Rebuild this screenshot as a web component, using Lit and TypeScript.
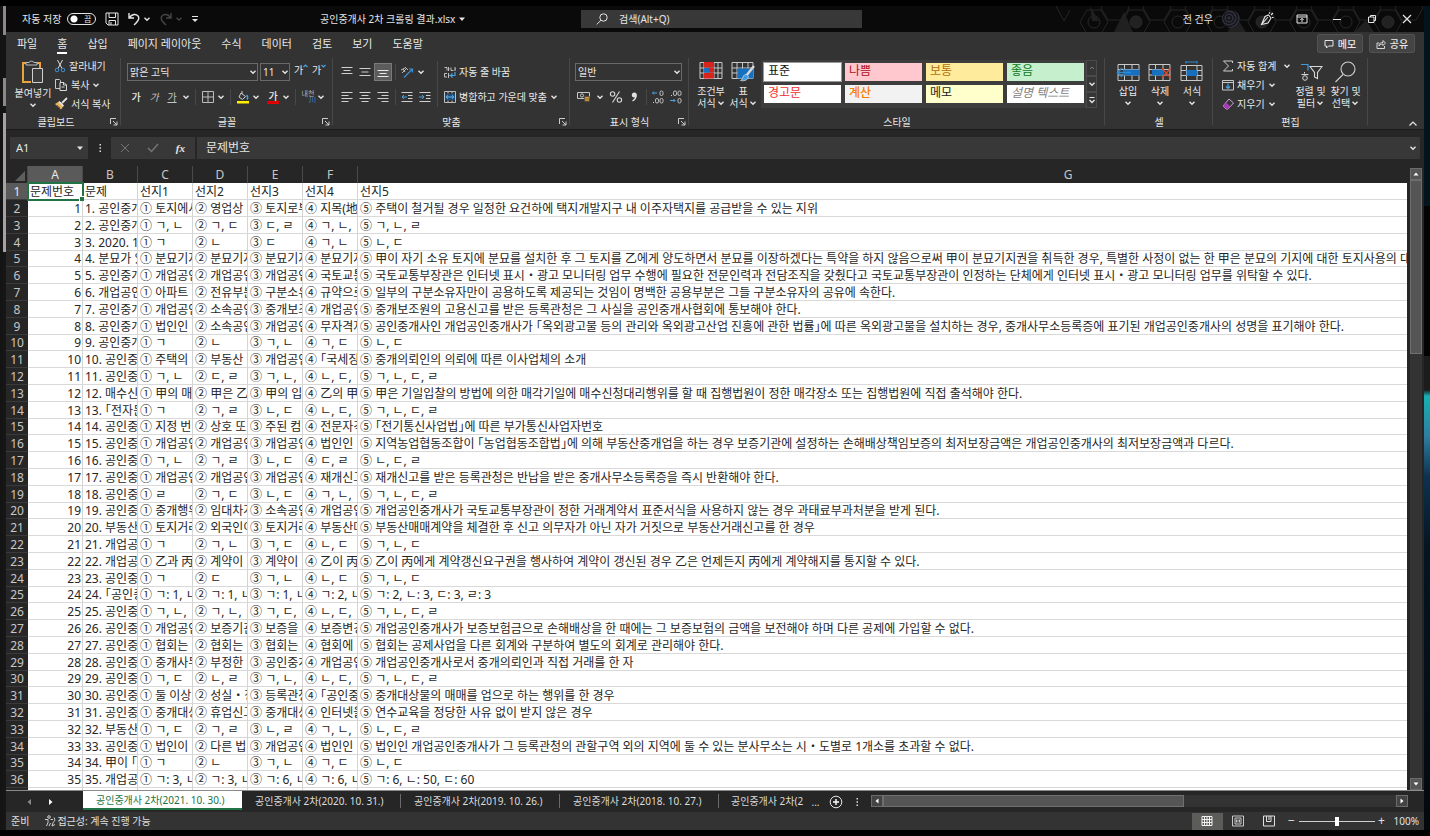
import { LitElement, html, css, svg, nothing } from "lit";
import { customElement, property } from "lit/decorators.js";
import { classMap } from "lit/directives/class-map.js";

const ICONS: Record<string, [number, number, unknown]> = {
  caret: [8, 8, svg`<path d="M1.5 2.8 4 5.2 6.5 2.8" stroke="#e6e6e6" stroke-width="1.4"/>`],
  caretDim: [8, 8, svg`<path d="M1.5 2.8 4 5.2 6.5 2.8" stroke="#4a4a4a" stroke-width="1.3"/>`],
  solid: [8, 8, svg`<path d="M1 2.5h6L4 6z" fill="#e6e6e6"/>`],
  save: [14, 14, svg`<path d="M1 1h12v12H3l-2-2z M4 1v4.5h6.5V1 M4 13V8.5h6.5V13 M6 10v3" stroke="#e6e6e6"/>`],
  undo: [14, 14, svg`<path d="M2 1v5h5 M2.3 5.6C5 2 9 1.600 11 4c2.500 3-.5 6-4 9" stroke="#e6e6e6" stroke-width="1.4"/>`],
  redo: [14, 14, svg`<path d="M12 1v5H7 M11.700 5.600C9 2 5 1.600 3 4c-2.500 3 .5 6 4 9" stroke="#454545" stroke-width="1.400"/>`],
  qat: [8, 10, svg`<path d="M1 2.500h6" stroke="#e6e6e6"/><path d="M1 5h6L4 8z" fill="#e6e6e6"/>`],
  search: [12, 12, svg`<circle cx="7.500" cy="4.500" r="3.700" stroke="#e6e6e6"/><path d="M5 7.200.8 11.400" stroke="#e6e6e6"/>`],
  pen: [14, 14, svg`<path d="M1.500 12.500 5 4.500l3.500-1.500 2.500 3-3 5zM1.500 12.500 8 5M9 1.500l1-1M11 3l2-2M12 5.500h1.500" stroke="#e6e6e6" stroke-width="1.100"/>`],
  ribbonOpt: [12, 12, svg`<path d="M1 2h10v8H1z M1 4h10 M6 9V5.500 M4.300 7 6 5.300 7.700 7" stroke="#e6e6e6"/>`],
  min: [10, 10, svg`<path d="M1 5.500h8" stroke="#e6e6e6"/>`],
  max: [10, 10, svg`<path d="M1.500 3h5.500v5.500H1.500z M3.500 3V1.500h5v5H7" stroke="#e6e6e6"/>`],
  close: [10, 10, svg`<path d="m1 1 8 8M9 1 1 9" stroke="#e6e6e6" stroke-width="1.200"/>`],
  memo: [10, 10, svg`<path d="M1 1.500h8v5.500H4.500L2.500 9V7H1z" stroke="#e6e6e6"/>`],
  share: [10, 10, svg`<path d="M3 4H1v5.500h7.500V7 M3 7c0-3 2-3.500 4-3.500V1.500L9.500 4 7 6.500V5C5 5 4 5.500 3 7z" stroke="#e6e6e6" stroke-width=".9"/>`],
  paste: [24, 26, svg`<path d="M6 4H2v19h8M15 4h4v5" stroke="#e9a33b" stroke-width="2"/><path d="M5 6V3.500h3a3 3 0 0 1 5 0h3V6z" fill="#333" stroke="#bdbdbd"/><path d="M11.500 9.500h10v14h-10z" fill="#3b3b3b" stroke="#d0d0d0"/>`],
  cut: [12, 14, svg`<path d="M3.500 1 8 9.500M8.500 1 4 9.500" stroke="#d8d8d8"/><circle cx="3" cy="11" r="1.800" stroke="#3f8fd0"/><circle cx="9" cy="11" r="1.800" stroke="#3f8fd0"/>`],
  copy: [14, 14, svg`<path d="M1.500 1.500h4l1 1v8h-5z" stroke="#c8c8c8"/><path d="M6 4.500h4l2.500 2.500v5.500H6z M9.500 4.500V7h3 M7.500 9h3" fill="#333" stroke="#d8d8d8"/>`],
  brush: [14, 14, svg`<path d="m13 1-5 5" stroke="#e0e0e0" stroke-width="1.800"/><path d="M5 4.500 9.500 9 7 12.500 1 7z" fill="#e8b765"/><path d="m5 4.500 4.500 4.500" stroke="#f0f0f0" stroke-width="1.400"/><path d="m3 8 3 3" stroke="#8b642a"/>`],
  upMark: [5, 4, svg`<path d="M.5 3 2.500 1l2 2" stroke="#4aa3e0" stroke-width="1.200"/>`],
  downMark: [5, 4, svg`<path d="M.5 1 2.500 3l2-2" stroke="#4aa3e0" stroke-width="1.200"/>`],
  border: [12, 12, svg`<path d="M.5.5h11v11H.5z M6 1v10M1 6h10" stroke="#bdbdbd"/>`],
  fill: [14, 14, svg`<path d="M5 3 9.500 6.500 6.500 9.500 3 7z M6 4V1" stroke="#d0d0d0"/><path d="M10.500 5c1.500 1.500 1.500 3 .5 4.500" stroke="#4aa3e0" stroke-width="1.400"/><path d="M1 11h12v2.500H1z" fill="#ffee00"/>`],
  top: [12, 12, svg`<path d="M.5 1.500h11M2.500 4.500h7M.5 7.500h11" stroke="#d0d0d0"/>`],
  mid: [12, 12, svg`<path d="M.5 2.500h11M2.500 6h7M.5 9.500h11" stroke="#d0d0d0"/>`],
  bot: [12, 12, svg`<path d="M.5 4.500h11M2.500 7.500h7M.5 10.500h11" stroke="#e8e8e8"/>`],
  left: [12, 12, svg`<path d="M.5 1.500h11M.5 4.500h7M.5 7.500h11M.5 10.500h7" stroke="#d0d0d0"/>`],
  center: [12, 12, svg`<path d="M.5 1.500h11M2.500 4.500h7M.5 7.500h11M2.500 10.500h7" stroke="#d0d0d0"/>`],
  right: [12, 12, svg`<path d="M.5 1.500h11M4.500 4.500h7M.5 7.500h11M4.500 10.500h7" stroke="#d0d0d0"/>`],
  orient: [14, 14, svg`<path d="M1 5l4-2M2 8l4-4M3 4l2 3M5 2l3 3" stroke="#bdbdbd"/><path d="M4 12.500 12.500 4M9 4h3.500v3.500" stroke="#3f8fd0" stroke-width="1.200"/>`],
  outdent: [12, 12, svg`<path d="M.5 1.500h11M7 4.500h4.500M7 7.500h4.500M.5 10.500h11" stroke="#d0d0d0"/><path d="M6 6H1M3 4 1 6l2 2" stroke="#4aa3e0"/>`],
  indent: [12, 12, svg`<path d="M.5 1.500h11M7 4.500h4.500M7 7.500h4.500M.5 10.500h11" stroke="#d0d0d0"/><path d="M0 6h5M3 4l2 2-2 2" stroke="#4aa3e0"/>`],
  wrap: [12, 12, svg`<path d="M.5 1.500H3v3M4.500 1v4M4.500 3h1M7 1.500v3h2.500M11 1v4M11 3h1M.5 7.500V11H3M.5 7.500H3M4.500 7v5M4.500 9.500h1" stroke="#cfcfcf" stroke-width=".9"/><path d="M11 6v3.500H6.500M8.500 7.500l-2 2 2 2" stroke="#4aa3e0" stroke-width="1.200"/>`],
  merge: [12, 12, svg`<path d="M.5.5h11v11H.5z M4 .5v2M8 .5v2M4 9.500v2M8 9.500v2" stroke="#bdbdbd"/><path d="M1 3h10v6H1z" fill="#1d4f7c"/><path d="M2 6h8M4 4.300 2.200 6 4 7.700M8 4.300 9.800 6 8 7.700" stroke="#6bb8ef"/>`],
  money: [14, 12, svg`<path d="M.5 1.500h12v6H.5z" stroke="#c8c8c8"/><circle cx="5" cy="4.500" r="1.600" stroke="#c8c8c8"/><path d="M7.500 5.500h5v5h-5z" fill="#e3ad55" stroke="#333" stroke-width=".6"/><path d="M8 7.300h4M8 9h4" stroke="#6d4c17" stroke-width=".7"/>`],
  percent: [14, 14, svg`<circle cx="3.600" cy="4" r="2.200" stroke="#d8d8d8" stroke-width="1.100"/><circle cx="10.400" cy="10" r="2.200" stroke="#d8d8d8" stroke-width="1.100"/><path d="M10.500 1.500l-7 11" stroke="#d8d8d8" stroke-width="1.100"/>`],
  comma: [8, 12, svg`<circle cx="4.300" cy="4" r="2.500" fill="#e0e0e0"/><path d="M5.900 4c.4 3-1 4.500-3.400 6" stroke="#e0e0e0" stroke-width="1.400"/>`],
  incDec: [14, 14, svg`<path d="M6 3H1.500M3 1.500 1.500 3 3 4.500" stroke="#4aa3e0"/><rect x="9" y="1" width="3" height="4.500" rx="1.400" stroke="#d0d0d0" stroke-width=".9"/><path d="M2.500 12v1" stroke="#d0d0d0"/><rect x="4.500" y="8.500" width="3" height="4.500" rx="1.400" stroke="#d0d0d0" stroke-width=".9"/><rect x="9" y="8.500" width="3" height="4.500" rx="1.400" stroke="#d0d0d0" stroke-width=".9"/>`],
  decDec: [14, 14, svg`<path d="M1 10.500h5M4.500 9 6 10.500 4.500 12" stroke="#4aa3e0"/><rect x="9" y="8.500" width="3" height="4.500" rx="1.400" stroke="#d0d0d0" stroke-width=".9"/><path d="M2.500 5v1" stroke="#d0d0d0"/><rect x="4.500" y="1" width="3" height="4.500" rx="1.400" stroke="#d0d0d0" stroke-width=".9"/><rect x="9" y="1" width="3" height="4.500" rx="1.400" stroke="#d0d0d0" stroke-width=".9"/>`],
  cond: [24, 20, svg`<path d="M1 1.500h22v16H1z M5 1.500v16M15 1.500v16M19 1.500v16M1 7h22M1 12h22" stroke="#c8c8c8"/><path d="M5 1h10v5.500H5zM5 12h10v5.500H5z" fill="#d8231d"/><path d="M5 7h5v4.500H5z" fill="#1b6fc2"/><path d="M10 7h5v4.500h-5z" fill="#d8231d"/>`],
  tableFmt: [24, 22, svg`<path d="M1 1.500h21v16H1z M6 1.500v16M11.500 1.500v16M17 1.500v16M1 7h21M1 12h21" stroke="#c8c8c8"/><path d="M6.500 7.500H22v10H6.500z" fill="#1670be"/><path d="M23 5 15 15" stroke="#d8d8d8" stroke-width="2.400"/><path d="M15.500 13.500c2 1 2.500 3 1 4.500-2 2-5 2-7 1.500 2-1 2-2 2.500-3.500.6-1.700 2-2.800 3.500-2.500z" fill="#3f9be0" stroke="#e0e0e0" stroke-width=".7"/>`],
  insert: [24, 22, svg`<path d="M2 3.500h21v16H2z M8.500 3.500v16M16 3.500v16M2 8.500h21M2 14h21" stroke="#c8c8c8"/><path d="M7 8.500h17v6H7z" fill="#1670be"/><path d="M15 11.500H1.500M6 7l-4.500 4.500L6 16" stroke="#2f8ad4" stroke-width="1.500"/>`],
  remove: [24, 22, svg`<path d="M1 3.500h21v16H1z M7.500 3.500v16M15 3.500v16M1 8.500h21M1 14h21" stroke="#c8c8c8"/><path d="M4 8.500h12v6H4z" fill="#1670be"/><path d="m14 7.500 8.500 9M22.500 7.500l-8.500 9" stroke="#d9452c" stroke-width="1.500"/>`],
  format: [24, 22, svg`<path d="M5.500 1h12M6 0v2.500M17 0v2.500" stroke="#2f8ad4"/><path d="M1 4.500h21v15H1z M6.500 4.500v15M17 4.500v15M1 9.500h21M1 14.500h21" stroke="#c8c8c8"/><path d="M6.500 9h10.500v6H6.500z" fill="#1670be"/>`],
  sum: [12, 12, svg`<path d="M10.500 3V1H1.500l5 5-5 5h9V9" stroke="#d0d0d0"/>`],
  fillDown: [12, 12, svg`<path d="M.5 1.500h11v9.500H.5z M.5 3.500h11" stroke="#c8c8c8"/><path d="M6 4.500V9.500M4 7.500l2 2 2-2" stroke="#4aa3e0" stroke-width="1.200"/>`],
  erase: [12, 12, svg`<path d="M7 1 11.500 5 6 11H4L1 8z" stroke="#d6a5dd"/><path d="M4 4.500 8.500 8.500 6 11H4L1 8z" fill="#a53cb5"/>`],
  sort: [24, 22, svg`<path d="M2 3.500h7v6" stroke="#3f9be0" stroke-width="1.200"/><path d="M5.500 11v1.500M2.500 13.500h7" stroke="#d8d8d8"/><circle cx="6" cy="17" r="2.300" stroke="#d8d8d8"/><path d="M11 5.500h12l-4.500 6v6l-3-1.500v-4.500z" stroke="#d8d8d8" stroke-width="1.100"/>`],
  find: [24, 22, svg`<circle cx="14" cy="8" r="7" stroke="#d0d0d0" stroke-width="1.100"/><path d="M9 13.500 1.500 21" stroke="#d0d0d0" stroke-width="1.100"/>`],
  launch: [8, 8, svg`<path d="M.5 6V.5H6M3 3l4 4M7 3.500V7H3.500" stroke="#dcdcdc" stroke-width=".9"/>`],
  up: [8, 8, svg`<path d="M.5 5.500 4 2l3.500 3.500" stroke="#e6e6e6" stroke-width="1.200"/>`],
  upDim: [8, 8, svg`<path d="M2 5 4 3l2 2" stroke="#777"/>`],
  more: [8, 8, svg`<path d="M1.500 1.500h5" stroke="#e6e6e6"/><path d="M1.500 4 4 6.500 6.500 4" stroke="#e6e6e6" stroke-width="1.300"/>`],
  dots: [4, 10, svg`<path d="M1.500 1h1.500v1.500H1.500zM1.500 4.300h1.500v1.500H1.500zM1.500 7.600h1.500v1.500H1.500z" fill="#ddd"/>`],
  cancel: [10, 10, svg`<path d="m1 1 8 8M9 1 1 9" stroke="#757575"/>`],
  check: [12, 10, svg`<path d="m1 5 3.500 3.500L11 1" stroke="#757575" stroke-width="1.500"/>`],
  corner: [10, 10, svg`<path d="M10 0v10H0z" fill="#5e5e5e"/>`],
  prev: [6, 8, svg`<path d="M5 1v6L1.500 4z" fill="#8a8a8a"/>`],
  next: [6, 8, svg`<path d="M1 1v6l3.500-3z" fill="#fff"/>`],
  sbUp: [8, 8, svg`<path d="M1.500 5.500h5L4 2.500z" fill="#fff"/>`],
  sbDown: [8, 8, svg`<path d="M1.500 2.500h5L4 5.500z" fill="#fff"/>`],
  sbLeft: [8, 8, svg`<path d="M5.500 1.500v5L2.500 4z" fill="#fff"/>`],
  sbRight: [8, 8, svg`<path d="M2.500 1.500v5L5.500 4z" fill="#fff"/>`],
  add: [14, 14, svg`<circle cx="7" cy="7" r="5.800" stroke="#e6e6e6"/><path d="M4 7h6M7 4v6" stroke="#fff" stroke-width="1.400"/>`],
  a11y: [12, 12, svg`<circle cx="5" cy="2" r="1.300" stroke="#e0e0e0" stroke-width=".9"/><path d="M1 4.500h3v3L2.500 11M9 4.500H6.500M6.500 8 5 11M10 2.500c1.500 2 .8 4-1 5L8 11l3-1.500" stroke="#e0e0e0" stroke-width=".9"/>`],
  vNormal: [12, 12, svg`<path d="M1 1.500h10v9H1zM3.500 1.500v9M6 1.500v9M8.500 1.500v9M1 4.500h10M1 7.500h10" stroke="#f0f0f0"/>`],
  vPage: [12, 12, svg`<path d="M.5 1h11v10H.5z M3 3h6v6H3z M4.500 4.500v3M6 4.500v3M7.500 4.500v3" stroke="#d8d8d8" stroke-width=".9"/>`],
  vBreak: [12, 12, svg`<path d="M.5 1h11v10H.5z M3.500 1v5.500H8V1M6 1v4" stroke="#e0e0e0"/>`],
};

const icon = (name: string) => {
  const [w, h, body] = ICONS[name];
  return html`<svg width=${w} height=${h} viewBox="0 0 ${w} ${h}" fill="none" aria-hidden="true">${body}</svg>`;
};

const uiFont = css`
  :host, button, input, select {
    font-family: "Noto Sans", "Noto Sans CJK KR", sans-serif;
    font-size: 10px;
    line-height: 12px;
  }
  * { box-sizing: border-box; }
  button {
    background: none; border: 0; margin: 0; padding: 0; color: inherit;
    display: flex; align-items: center; justify-content: center; white-space: nowrap;
  }
  svg { display: block; flex: none; }
`;

const TABS = ["파일", "홈", "삽입", "페이지 레이아웃", "수식", "데이터", "검토", "보기", "도움말"];

@customElement("title-bar")
class TitleBar extends LitElement {
  static styles = [uiFont, css`
    :host { display: flex; align-items: center; height: 26px; background: #0a0a0a; color: #e6e6e6; position: relative; }
    .quick { display: flex; align-items: center; width: 314px; padding-left: 16px; }
    .auto { display: flex; align-items: center; gap: 6px; margin-right: 9px; }
    .toggle { appearance: none; width: 29px; height: 12px; margin: 0; border: 1px solid #e6e6e6; border-radius: 6px;
      background: radial-gradient(circle at 6px 5px, #fff 3px, transparent 4px); }
    .switch { position: relative; display: flex; }
    .state { position: absolute; right: 5px; top: 0; font-size: 8px; line-height: 12px; }
    .group { display: flex; align-items: center; gap: 2px; margin-right: 8px; }
    .file { width: 261px; display: flex; align-items: center; gap: 3px; }
    .search { display: flex; align-items: center; gap: 11px; width: 281px; height: 18px; background: #383838; padding-left: 15px; }
    .search input { flex: 1; min-width: 0; background: none; border: 0; padding: 0; outline: 0; color: #e6e6e6; }
    .search input::placeholder { color: #e6e6e6; opacity: 1; }
    .right { flex: 1; display: flex; align-items: center; justify-content: flex-end; height: 26px; z-index: 1; }
    .right button { width: 35px; height: 26px; }
    .user { gap: 9px; margin-right: 9px; display: flex; align-items: center; }
    .avatar { width: 18px; height: 18px; border-radius: 50%; background: repeating-radial-gradient(circle at 7px 8px, #30303c 0 1px, #15151b 2px 3px); }
    .art { position: absolute; right: 0; top: 0; }
  `];
  render() {
    const hex = (x: number, y: number, f = "none") =>
      svg`<path d="M${x} ${y}l7-12h14l7 12-7 12h-14z" fill=${f} stroke="#252525"/>`;
    return html`
      <svg class="art" width="372" height="26" viewBox="0 0 372 26" fill="none" aria-hidden="true">
        <path d="M4 0l8 15 6-11" stroke="#252525"/>
        ${[28, 70, 112, 154, 196, 238, 280, 322].map((x, i) => svg`${hex(x, 16)}${hex(x + 21, 2)}
          <circle cx=${x + 14} cy="16" r="6" fill=${i % 3 === 1 ? "#222" : "none"} stroke="#292929"/>`)}
        <path d="M38 0l9 15-7 0zM62 26l10-20 9 20zM176 26l9-14 9 14zM302 26l12-12 8 12z" fill="#202020"/>
      </svg>
      <div class="quick">
        <label class="auto">자동 저장
          <span class="switch"><input class="toggle" type="checkbox" aria-label="자동 저장"><span class="state">끔</span></span>
        </label>
        <div class="group"><button aria-label="저장">${icon("save")}</button></div>
        <div class="group"><button aria-label="실행 취소">${icon("undo")}</button>${icon("caret")}</div>
        <div class="group"><button aria-label="다시 실행">${icon("redo")}</button>${icon("caretDim")}</div>
        <button aria-label="빠른 실행 도구 모음">${icon("qat")}</button>
      </div>
      <div class="file">공인중개사 2차 크롤링 결과.xlsx ${icon("solid")}</div>
      <label class="search">${icon("search")}<input placeholder="검색(Alt+Q)" aria-label="검색"></label>
      <div class="right">
        <div class="user">전 건우<span class="avatar"></span></div>
        ${["pen", "ribbonOpt", "min", "max", "close"].map((n) => html`<button aria-label=${n}>${icon(n)}</button>`)}
      </div>`;
  }
}

@customElement("ribbon-bar")
class RibbonBar extends LitElement {
  static styles = [uiFont, css`
    :host { display: block; background: #333; color: #e8e8e8; border-bottom: 1px solid #1c1c1c; }
    .tabs { display: flex; align-items: center; height: 23px; padding: 0 9px 0 11px; gap: 20px; }
    .tabs button { font-size: 11px; height: 21px; border-bottom: 2px solid transparent; padding-top: 2px; }
    .tabs .on { border-bottom-color: #fff; }
    .acts { margin-left: auto; display: flex; gap: 6px; }
    .tabs .acts button { width: 46px; height: 19px; font-size: 10px; gap: 4px; background: #444; border: 1px solid #525252; border-radius: 2px; padding: 0; font-weight: 500; }
    .groups { display: flex; height: 74px; }
    .g { display: flex; flex-direction: column; position: relative; padding-top: 2px; flex: none; }
    .g::after { content: ""; position: absolute; right: 0; top: 3px; bottom: 4px; width: 1px; background: #484848; }
    .body { display: flex; height: 58px; }
    .cap { text-align: center; line-height: 14px; }
    .g .launch { position: absolute; right: 3px; bottom: 3px; }
    .clip { width: 115px; } .font { width: 212px; } .align { width: 237px; } .num { width: 119px; }
    .style { width: 416px; } .cells { width: 108px; } .edit { width: 155px; }
    .clip .cap { padding-right: 15px; }
    .clip .body { padding-left: 6px; } .font .body { padding-left: 6px; } .align .body { padding-left: 5px; }
    .num .body { padding-left: 5px; } .style .body { padding-left: 6px; } .cells .body { padding-left: 7px; } .edit .body { padding-left: 9px; }
    .big { flex-direction: column; justify-content: flex-start; width: 32px; padding-top: 4px; }
    .big .pic { height: 24px; }
    .big .line { display: flex; align-items: center; gap: 1px; height: 12px; }
    .edit .big { width: 35px; }
    .edit .three { margin-right: 2px; }
    .paste { width: 42px; padding-top: 2px; }
    .paste .pic { height: 28px; }
    .three { display: flex; flex-direction: column; gap: 1px; }
    .three button { height: 18px; gap: 3px; justify-content: flex-start; }
    .wide { width: 54px; justify-content: space-between; }
    .wide, .lab { display: flex; align-items: center; gap: 3px; }
    .two { display: flex; flex-direction: column; gap: 1px; padding-top: 3px; }
    .row { display: flex; align-items: center; height: 24px; }
    .b { width: 18px; height: 18px; }
    .k { width: 10px; } .i { width: 16px; } .far { margin-left: 4px; }
    .k2 { width: 14px; }
    .on-box { background: #5c5c5c; border: 1px solid #7a7a7a; }
    .sep { width: 9px; display: flex; justify-content: center; } .slim { width: 6px; }
    .sep::before { content: ""; width: 1px; height: 16px; background: #474747; }
    .tall { width: 1px; height: 46px; margin: 4px 6px 0 3px; background: #484848; }
    .pick { position: relative; display: flex; align-items: center; height: 18px; }
    .pick select { appearance: none; width: 100%; height: 18px; background: #333; border: 1px solid #6a6a6a; border-radius: 0; color: #e8e8e8; padding: 0 2px; }
    .pick svg { position: absolute; right: 1px; }
    .name { width: 131px; margin-right: 2px; } .size { width: 30px; margin-right: 2px; } .kind { width: 107px; }
    .it { font-style: italic; } .un { text-decoration: underline; }
    .dim { color: #c4c4c4; } .bold { font-weight: 500; }
    .mark { align-items: flex-start; padding-top: 1px; }
    .colour { flex-direction: column; line-height: 10px; }
    .colour::after { content: ""; width: 12px; height: 3px; background: #e00000; }
    .han { flex-direction: column; font-size: 7px; line-height: 6px; color: #b5b5b5; }
    .han em { font-style: normal; color: #3f8fd0; align-self: flex-end; }
    .gallery { display: flex; margin: 3px 0 4px 2px; background: #3d3d3d; height: 48px; padding-left: 1px; }
    .sw { display: grid; grid-template-columns: repeat(4, 77px); grid-template-rows: 18px 18px; gap: 4px; padding: 3px 2px; }
    .sw button { justify-content: flex-start; align-items: flex-start; padding: 0 4px; font-size: 12px; line-height: 16px; }
    .s-std { background: #fff; color: #111; outline: 1px solid #999; }
    .s-bad { background: #ffc7ce; color: #b01020; } .s-mid { background: #ffeb9c; color: #b0700a; }
    .s-good { background: #c6efce; color: #0b7a1a; } .s-warn { background: #fff; color: #ee3030; }
    .s-calc { background: #f2f2f2; color: #fa7d00; font-weight: 500; } .s-memo { background: #ffffcc; color: #222; }
    .s-desc { background: #fff; color: #7f7f7f; font-style: italic; }
    .scroll { width: 11px; display: flex; flex-direction: column; }
    .scroll button { flex: 1; border: 1px solid #4a4a4a; background: #363636; }
    .rest { flex: 1; display: flex; justify-content: flex-end; align-items: flex-end; padding: 0 7px 1px 0; }
  `];

  private big(name: string, a: string, b?: string, cls = "") {
    return html`<button class="big ${cls}"><span class="pic">${icon(name)}</span>
      <span class="line">${a}</span><span class="line">${b ?? nothing}${icon("caret")}</span></button>`;
  }
  private btn(name: string, label: string, cls = "b") {
    return html`<button class=${cls} aria-label=${label}>${icon(name)}</button>`;
  }
  private drop(cls = "k") {
    return html`<button class=${cls} aria-label="옵션">${icon("caret")}</button>`;
  }
  private launcher() {
    return html`<button class="launch" aria-label="대화 상자 표시">${icon("launch")}</button>`;
  }

  render() {
    const styles = [["std", "표준"], ["bad", "나쁨"], ["mid", "보통"], ["good", "좋음"], ["warn", "경고문"], ["calc", "계산"], ["memo", "메모"], ["desc", "설명 텍스트"]];
    return html`
      <nav class="tabs">
        ${TABS.map((t) => html`<button class=${classMap({ on: t === "홈" })}>${t}</button>`)}
        <div class="acts"><button>${icon("memo")}메모</button><button>${icon("share")}공유</button></div>
      </nav>
      <div class="groups">
        <section class="g clip">
          <div class="body">
            <button class="big paste"><span class="pic">${icon("paste")}</span><span class="line">붙여넣기</span><span class="line">${icon("caret")}</span></button>
            <div class="three">
              <button>${icon("cut")}잘라내기</button>
              <button>${icon("copy")}복사 ${this.drop("k2")}</button>
              <button>${icon("brush")}서식 복사</button>
            </div>
          </div>
          <div class="cap">클립보드</div>${this.launcher()}
        </section>
        <section class="g font">
          <div class="body"><div class="two">
            <div class="row">
              <span class="pick name"><select aria-label="글꼴"><option>맑은 고딕</option></select>${icon("caret")}</span>
              <span class="pick size"><select aria-label="글꼴 크기"><option>11</option></select>${icon("caret")}</span>
              <button class="b mark">가${icon("upMark")}</button><button class="b mark">가${icon("downMark")}</button>
            </div>
            <div class="row">
              <button class="b bold">가</button><button class="b it dim">가</button><button class="b un dim">가</button>${this.drop()}
              <span class="sep"></span>${this.btn("border", "테두리", "i")}${this.drop()}
              <span class="sep"></span>${this.btn("fill", "채우기 색", "i")}${this.drop()}
              <button class="i far colour bold">가</button>${this.drop()}
              <span class="sep"></span><button class="i han">내천<em>川</em></button>${this.drop()}
            </div>
          </div></div>
          <div class="cap">글꼴</div>${this.launcher()}
        </section>
        <section class="g align">
          <div class="body">
            <div class="two">
              <div class="row">${this.btn("top", "위쪽 맞춤")}${this.btn("mid", "가운데 맞춤")}${this.btn("bot", "아래쪽 맞춤", "b on-box")}
                <span class="sep slim"></span>${this.btn("orient", "방향")}${this.drop()}</div>
              <div class="row">${this.btn("left", "왼쪽 맞춤")}${this.btn("center", "가운데")}${this.btn("right", "오른쪽 맞춤")}
                <span class="sep slim"></span>${this.btn("outdent", "내어쓰기")}${this.btn("indent", "들여쓰기")}</div>
            </div>
            <span class="tall"></span>
            <div class="two">
              <div class="row"><button class="lab">${icon("wrap")}자동 줄 바꿈</button></div>
              <div class="row"><button class="lab">${icon("merge")}병합하고 가운데 맞춤</button>${this.drop("k2")}</div>
            </div>
          </div>
          <div class="cap">맞춤</div>${this.launcher()}
        </section>
        <section class="g num">
          <div class="body"><div class="two">
            <div class="row"><span class="pick kind"><select aria-label="표시 형식"><option>일반</option></select>${icon("caret")}</span></div>
            <div class="row">${this.btn("money", "회계 표시 형식")}${this.drop("k2")}${this.btn("percent", "백분율")}${this.btn("comma", "쉼표")}
              <span class="sep slim"></span>${this.btn("incDec", "자릿수 늘림")}${this.btn("decDec", "자릿수 줄임")}</div>
          </div></div>
          <div class="cap">표시 형식</div>${this.launcher()}
        </section>
        <section class="g style">
          <div class="body">
            ${this.big("cond", "조건부", "서식")}${this.big("tableFmt", "표", "서식")}
            <div class="gallery">
              <div class="sw">${styles.map(([k, t]) => html`<button class="s-${k}">${t}</button>`)}</div>
              <div class="scroll">${this.btn("upDim", "위로", "")}${this.btn("caret", "아래로", "")}${this.btn("more", "자세히", "")}</div>
            </div>
          </div>
          <div class="cap">스타일</div>
        </section>
        <section class="g cells">
          <div class="body">${this.big("insert", "삽입")}${this.big("remove", "삭제")}${this.big("format", "서식")}</div>
          <div class="cap">셀</div>
        </section>
        <section class="g edit">
          <div class="body">
            <div class="three">
              <button>${icon("sum")}<span class="wide">자동 합계${icon("caret")}</span></button>
              <button>${icon("fillDown")}<span class="lab">채우기${icon("caret")}</span></button>
              <button>${icon("erase")}<span class="lab">지우기${icon("caret")}</span></button>
            </div>
            ${this.big("sort", "정렬 및", "필터")}${this.big("find", "찾기 및", "선택")}
          </div>
          <div class="cap">편집</div>
        </section>
        <div class="rest"><button aria-label="리본 메뉴 축소">${icon("up")}</button></div>
      </div>`;
  }
}

@customElement("formula-bar")
class FormulaBar extends LitElement {
  static styles = [uiFont, css`
    :host { display: flex; align-items: center; height: 36px; padding: 0 4px; background: #262626; color: #e6e6e6; }
    .name { display: flex; align-items: center; width: 78px; height: 22px; background: #383838; padding: 0 4px 0 6px; }
    input { flex: 1; min-width: 0; background: none; border: 0; outline: 0; padding: 0; color: #e6e6e6; font-size: 11px; }
    .dots { width: 23px; display: flex; justify-content: center; }
    .tools { display: flex; align-items: center; justify-content: space-between; width: 84px; height: 22px; background: #383838; padding: 0 10px 0 9px; margin-right: 2px; }
    .fx { font: italic bold 11px/14px "Liberation Serif", serif; }
    .text { flex: 1; display: flex; align-items: center; height: 22px; background: #383838; padding: 0 3px 0 9px; }
    .text input { font-size: 12px; line-height: 16px; }
  `];
  render() {
    return html`
      <label class="name"><input aria-label="이름 상자" value="A1">${icon("solid")}</label>
      <span class="dots">${icon("dots")}</span>
      <div class="tools"><button aria-label="취소">${icon("cancel")}</button><button aria-label="입력">${icon("check")}</button><button class="fx">fx</button></div>
      <label class="text"><input aria-label="수식 입력줄" value="문제번호">${icon("caret")}</label>`;
  }
}

const ROWS: string[][] = [
  ["1. 공인중개", "토지에서", "영업상", "토지로부", "지목(地", "주택이 철거될 경우 일정한 요건하에 택지개발지구 내 이주자택지를 공급받을 수 있는 지위"],
  ["2. 공인중개", "ㄱ, ㄴ", "ㄱ, ㄷ", "ㄷ, ㄹ", "ㄱ, ㄴ,", "ㄱ, ㄴ, ㄹ"],
  ["3. 2020. 10", "ㄱ", "ㄴ", "ㄷ", "ㄱ, ㄴ", "ㄴ, ㄷ"],
  ["4. 분묘가 있", "분묘기지", "분묘기지", "분묘기지", "분묘기지", "甲이 자기 소유 토지에 분묘를 설치한 후 그 토지를 乙에게 양도하면서 분묘를 이장하겠다는 특약을 하지 않음으로써 甲이 분묘기지권을 취득한 경우, 특별한 사정이 없는 한 甲은 분묘의 기지에 대한 토지사용의 대가"],
  ["5. 공인중개", "개업공인", "개업공인", "개업공인", "국토교통", "국토교통부장관은 인터넷 표시・광고 모니터링 업무 수행에 필요한 전문인력과 전담조직을 갖췄다고 국토교통부장관이 인정하는 단체에게 인터넷 표시・광고 모니터링 업무를 위탁할 수 있다."],
  ["6. 개업공인", "아파트", "전유부분", "구분소유", "규약으로", "일부의 구분소유자만이 공용하도록 제공되는 것임이 명백한 공용부분은 그들 구분소유자의 공유에 속한다."],
  ["7. 공인중개", "개업공인", "소속공인", "중개보조", "개업공인", "중개보조원의 고용신고를 받은 등록관청은 그 사실을 공인중개사협회에 통보해야 한다."],
  ["8. 공인중개", "법인인", "소속공인", "개업공인", "무자격자", "공인중개사인 개업공인중개사가 「옥외광고물 등의 관리와 옥외광고산업 진흥에 관한 법률」에 따른 옥외광고물을 설치하는 경우, 중개사무소등록증에 표기된 개업공인중개사의 성명을 표기해야 한다."],
  ["9. 공인중개", "ㄱ", "ㄴ", "ㄱ, ㄴ", "ㄱ, ㄷ", "ㄴ, ㄷ"],
  ["10. 공인중", "주택의", "부동산", "개업공인", "「국세징", "중개의뢰인의 의뢰에 따른 이사업체의 소개"],
  ["11. 공인중", "ㄱ, ㄴ", "ㄷ, ㄹ", "ㄱ, ㄴ,", "ㄴ, ㄷ,", "ㄱ, ㄴ, ㄷ, ㄹ"],
  ["12. 매수신", "甲의 매", "甲은 乙", "甲의 입", "乙의 甲", "甲은 기일입찰의 방법에 의한 매각기일에 매수신청대리행위를 할 때 집행법원이 정한 매각장소 또는 집행법원에 직접 출석해야 한다."],
  ["13. 「전자문", "ㄱ", "ㄱ, ㄹ", "ㄴ, ㄷ", "ㄴ, ㄷ,", "ㄱ, ㄴ, ㄷ, ㄹ"],
  ["14. 공인중", "지정 번", "상호 또", "주된 컴", "전문자격", "「전기통신사업법」에 따른 부가통신사업자번호"],
  ["15. 공인중", "개업공인", "개업공인", "개업공인", "법인인", "지역농업협동조합이 「농업협동조합법」에 의해 부동산중개업을 하는 경우 보증기관에 설정하는 손해배상책임보증의 최저보장금액은 개업공인중개사의 최저보장금액과 다르다."],
  ["16. 공인중", "ㄱ, ㄴ", "ㄱ, ㄹ", "ㄴ, ㄷ", "ㄷ, ㄹ", "ㄴ, ㄷ, ㄹ"],
  ["17. 공인중", "개업공인", "개업공인", "개업공인", "재개신고", "재개신고를 받은 등록관청은 반납을 받은 중개사무소등록증을 즉시 반환해야 한다."],
  ["18. 공인중", "ㄹ", "ㄱ, ㄷ", "ㄴ, ㄷ", "ㄱ, ㄴ,", "ㄱ, ㄴ, ㄷ, ㄹ"],
  ["19. 공인중", "중개행위", "임대차계", "소속공인", "개업공인", "개업공인중개사가 국토교통부장관이 정한 거래계약서 표준서식을 사용하지 않는 경우 과태료부과처분을 받게 된다."],
  ["20. 부동산", "토지거래", "외국인이", "토지거래", "부동산매", "부동산매매계약을 체결한 후 신고 의무자가 아닌 자가 거짓으로 부동산거래신고를 한 경우"],
  ["21. 개업공", "ㄱ", "ㄱ, ㄴ", "ㄱ, ㄷ", "ㄴ, ㄷ", "ㄱ, ㄴ, ㄷ"],
  ["22. 개업공", "乙과 丙", "계약이", "계약이", "乙이 丙", "乙이 丙에게 계약갱신요구권을 행사하여 계약이 갱신된 경우 乙은 언제든지 丙에게 계약해지를 통지할 수 있다."],
  ["23. 공인중", "ㄱ", "ㄷ", "ㄱ, ㄴ", "ㄴ, ㄷ", "ㄱ, ㄴ, ㄷ"],
  ["24. 「공인중", "ㄱ: 1, ㄴ", "ㄱ: 1, ㄴ", "ㄱ: 1, ㄴ", "ㄱ: 2, ㄴ", "ㄱ: 2, ㄴ: 3, ㄷ: 3, ㄹ: 3"],
  ["25. 공인중", "ㄱ, ㄴ,", "ㄱ, ㄴ,", "ㄱ, ㄷ,", "ㄴ, ㄷ,", "ㄱ, ㄴ, ㄷ, ㄹ"],
  ["26. 공인중", "개업공인", "보증기관", "보증을", "보증변경", "개업공인중개사가 보증보험금으로 손해배상을 한 때에는 그 보증보험의 금액을 보전해야 하며 다른 공제에 가입할 수 없다."],
  ["27. 공인중", "협회는", "협회는", "협회는", "협회에", "협회는 공제사업을 다른 회계와 구분하여 별도의 회계로 관리해야 한다."],
  ["28. 공인중", "중개사무", "부정한", "공인중개", "개업공인", "개업공인중개사로서 중개의뢰인과 직접 거래를 한 자"],
  ["29. 공인중", "ㄱ, ㄷ", "ㄴ, ㄹ", "ㄱ, ㄴ,", "ㄴ, ㄷ,", "ㄱ, ㄴ, ㄷ, ㄹ"],
  ["30. 공인중", "둘 이상", "성실・정", "등록관청", "「공인중", "중개대상물의 매매를 업으로 하는 행위를 한 경우"],
  ["31. 공인중", "중개대상", "휴업신고", "중개대상", "인터넷을", "연수교육을 정당한 사유 없이 받지 않은 경우"],
  ["32. 부동산", "ㄱ, ㄷ", "ㄱ, ㄹ", "ㄴ, ㄹ", "ㄱ, ㄴ,", "ㄴ, ㄷ, ㄹ"],
  ["33. 공인중", "법인이", "다른 법", "개업공인", "법인인", "법인인 개업공인중개사가 그 등록관청의 관할구역 외의 지역에 둘 수 있는 분사무소는 시・도별로 1개소를 초과할 수 없다."],
  ["34. 甲이 「부", "ㄱ", "ㄴ", "ㄱ, ㄴ", "ㄱ, ㄷ", "ㄴ, ㄷ"],
  ["35. 개업공", "ㄱ: 3, ㄴ", "ㄱ: 3, ㄴ", "ㄱ: 6, ㄴ", "ㄱ: 6, ㄴ", "ㄱ: 6, ㄴ: 50, ㄷ: 60"],
  ["36. 공인중", "거래당사", "개업공인", "개업공인", "시세에", "개업공인중개사가 거래를 금지한 당사자 간의 거래 이외의 다른 용도로 개설한 경우"],
];
const MARKS = ["", "① ", "② ", "③ ", "④ ", "⑤ "];

@customElement("sheet-grid")
class SheetGrid extends LitElement {
  static styles = [uiFont, css`
    :host { display: grid; grid-template-columns: 1fr 17px; background: #262626; min-height: 0; overflow: hidden; }
    .view { overflow: hidden; min-width: 0; background: #262626; }
    table { table-layout: fixed; border-collapse: separate; border-spacing: 0; width: 1773px; font-size: 12px; line-height: 15px; }
    .c-head { width: 22px; } .c-n { width: 55px; } .c-g { width: 1421px; }
    th, td { padding: 0 2px; white-space: nowrap; overflow: hidden; text-align: left; font-weight: 400; vertical-align: middle; }
    tr { height: 17px; }
    tbody tr:nth-child(5n) { height: 16px; }
    thead th { height: 16px; background: #262626; color: #c6c6c6; text-align: center; border-right: 1px solid #4a4a4a; }
    tbody th { background: #262626; color: #c6c6c6; text-align: center; padding: 0; border-bottom: 1px solid #3a3a3a; }
    td { background: #fff; color: #262626; border-right: 1px solid #d4d4d4; border-bottom: 1px solid #d9d9d9; }
    .quote { font-feature-settings: "halt"; }
    .n { text-align: right; padding-right: 1px; }
    .corner svg { margin-left: auto; margin-top: 3px; }
    thead .sel, tbody .sel { background: #5a5a5a; color: #e8e8e8; }
    .active { position: relative; overflow: visible; outline: 2px solid #217346; outline-offset: -1px; }
    .active::after { content: ""; position: absolute; right: -2px; bottom: -2px; width: 4px; height: 4px; background: #217346; border: 1px solid #fff; border-width: 1px 0 0 1px; }
    .bar { display: flex; flex-direction: column; margin: 2px 2px 0 3px; background: #333; }
    .bar button { height: 12px; background: #555; border: 1px solid #6c6c6c; }
    .thumb { height: 28%; background: #555; border: 1px solid #707070; }
    .bar .end { margin-top: auto; }
  `];
  render() {
    return html`
      <div class="view">
        <table>
          <colgroup><col class="c-head">${[1, 2, 3, 4, 5, 6].map(() => html`<col class="c-n">`)}<col class="c-g"></colgroup>
          <thead><tr><th class="corner">${icon("corner")}</th>${[..."ABCDEFG"].map((c) => html`<th class=${classMap({ sel: c === "A" })}>${c}</th>`)}</tr></thead>
          <tbody>
            <tr><th class="sel">1</th><td class="active">문제번호</td><td>문제</td>${[1, 2, 3, 4, 5].map((n) => html`<td>선지${n}</td>`)}</tr>
            ${ROWS.map((r, i) => html`<tr><th>${i + 2}</th><td class="n">${i + 1}</td>${r.map((t, j) =>
              html`<td class=${classMap({ quote: t.includes("「") })}>${MARKS[j]}${t}</td>`)}</tr>`)}
          </tbody>
        </table>
      </div>
      <div class="bar">
        <button aria-label="위로 스크롤">${icon("sbUp")}</button><div class="thumb"></div>
        <button class="end" aria-label="아래로 스크롤">${icon("sbDown")}</button>
      </div>`;
  }
}

@customElement("sheet-tabs")
class SheetTabs extends LitElement {
  @property({ type: Array }) names = ["2021. 10. 30.", "2020. 10. 31.", "2019. 10. 26.", "2018. 10. 27."];
  static styles = [uiFont, css`
    :host { display: flex; height: 21px; background: #262626; color: #dcdcdc; border-top: 1px solid #8a8a8a; }
    .nav { display: flex; width: 77px; padding: 0 29px 0 20px; justify-content: space-between; }
    .tab { width: 159px; height: 19px; position: relative; justify-content: flex-start; padding-left: 13px; }
    .tab + .tab::after { content: ""; position: absolute; right: 0; top: 3px; height: 14px; width: 1px; background: #6a6a6a; }
    .on { background: #fff; color: #217346; border-bottom: 2px solid #217346; }
    .cut { width: 86px; height: 19px; overflow: hidden; justify-content: flex-start; padding-left: 12px; }
    .dots { width: 21px; }
    .add { width: 19px; } .grip { width: 24px; }
    .scroll { flex: 1; display: flex; height: 12px; margin: 4px 16px 0 2px; background: #333; }
    .scroll button { width: 12px; background: #444; border: 1px solid #6c6c6c; }
    .thumb { width: 56%; background: #555; border: 1px solid #707070; }
    .end { margin-left: auto; }
  `];
  render() {
    return html`
      <div class="nav"><button aria-label="이전 시트">${icon("prev")}</button><button aria-label="다음 시트">${icon("next")}</button></div>
      ${this.names.map((n, i) => html`<button class=${classMap({ tab: true, on: i === 0 })}>공인중개사 2차(${n})</button>`)}
      <button class="cut">공인중개사 2차(2</button>
      <button class="dots">...</button>
      <button class="add" aria-label="새 시트">${icon("add")}</button>
      <button class="grip" aria-label="크기 조정">${icon("dots")}</button>
      <div class="scroll">
        <button aria-label="왼쪽">${icon("sbLeft")}</button><div class="thumb"></div>
        <button class="end" aria-label="오른쪽">${icon("sbRight")}</button>
      </div>`;
  }
}

@customElement("status-bar")
class StatusBar extends LitElement {
  static styles = [uiFont, css`
    :host { display: flex; align-items: center; height: 18px; background: #333; color: #e0e0e0; padding: 0 5px; }
    .acc { margin-left: 15px; gap: 1px; }
    .views { margin-left: auto; display: flex; }
    .views button { width: 31px; height: 17px; }
    .views .on { background: #5c5c5a; }
    .sign { width: 14px; font-size: 12px; }
    input { appearance: none; width: 76px; height: 12px; margin: 0; background: linear-gradient(#cfcfcf, #cfcfcf) 0 50% / 100% 1px no-repeat; }
    input::-webkit-slider-thumb { appearance: none; width: 4px; height: 9px; background: #fff; border-radius: 0; }
    .pct { margin-left: 5px; }
  `];
  render() {
    return html`
      <span>준비</span><button class="acc">${icon("a11y")}접근성: 계속 진행 가능</button>
      <div class="views">
        <button class="on" aria-label="기본">${icon("vNormal")}</button><button aria-label="페이지 레이아웃">${icon("vPage")}</button><button aria-label="페이지 나누기">${icon("vBreak")}</button>
      </div>
      <button class="sign">−</button><input type="range" aria-label="확대/축소" min="0" max="200" value="100"><button class="sign">+</button>
      <button class="pct">100%</button>`;
  }
}

@customElement("app-root")
class AppRoot extends LitElement {
  static styles = css`
    :host {
      display: block; height: 100vh; box-sizing: border-box; padding: 6px; overflow: hidden;
      background:
        linear-gradient(#000, #000) 0 0 / 100% 6px no-repeat,
        linear-gradient(#000, #000) 0 100% / 100% 6px no-repeat,
        linear-gradient(#8f8688 0 29px, #141414 29px 72px, #8f8688 72px 100px, #141414 100px 107px, #a8a0a2 107px 246px, #161616 246px) 3px 6px / 3px 100% no-repeat,
        linear-gradient(#04141c 0 200px, #030303 200px 350px, #1c1c1c 350px 384px, #19b0b0 390px, #2f7ea0 430px, #0d3350 470px, #051522 540px, #04080c) 100% 6px / 6px 100% no-repeat,
        #141414;
    }
    .window { display: grid; grid-template-rows: auto auto auto 1fr auto auto; height: 100%; background: #262626; }
  `;
  render() {
    return html`<main class="window">
      <title-bar></title-bar><ribbon-bar></ribbon-bar><formula-bar></formula-bar>
      <sheet-grid></sheet-grid><sheet-tabs></sheet-tabs><status-bar></status-bar>
    </main>`;
  }
}
